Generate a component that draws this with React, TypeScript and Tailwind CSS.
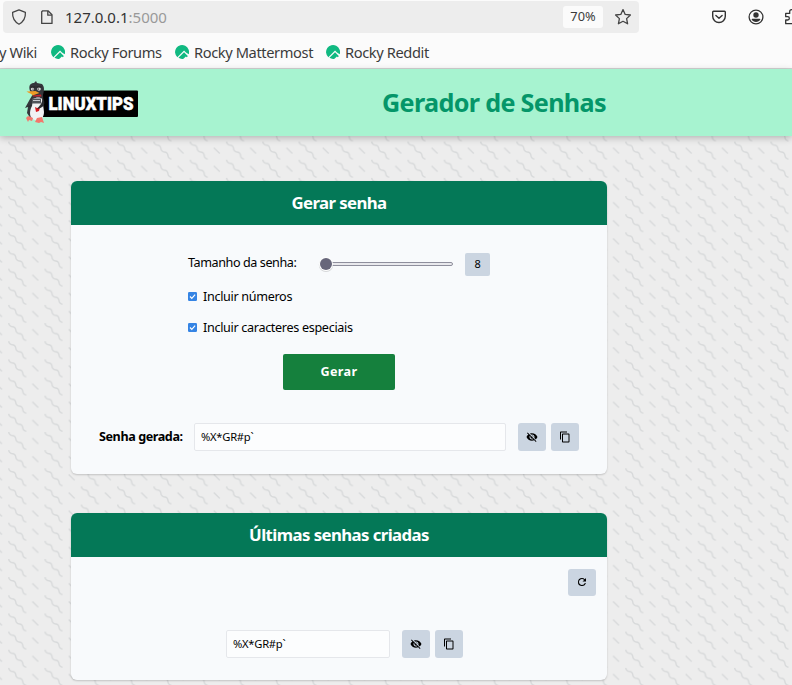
import React from "react";

const RockyIcon = () => (
  <svg width="14" height="14" viewBox="0 0 32 32" fill="#10b981" className="shrink-0">
    <path d="M31.3 21.2A16 16 0 1 0 5.3 27.9L20.7 12.5l4.4 4.4z" />
    <path d="M29.3 24.9l-8.6-8.5L7.9 29.2a16 16 0 0 0 8.1 2.8 16 16 0 0 0 3.4-.4l5.5-5.4 2 2a16 16 0 0 0 2.4-3.3z" />
  </svg>
);

const Bookmark = ({ label, className }: { label: string; className: string }) => (
  <div className={`flex items-center gap-[5px] whitespace-nowrap ${className}`}>
    <RockyIcon />
    <span>{label}</span>
  </div>
);

const EyeOff = () => (
  <svg width="12" height="12" viewBox="0 0 24 24" fill="#000">
    <path d="M12 7c2.76 0 5 2.24 5 5 0 .65-.13 1.26-.36 1.83l2.92 2.92c1.51-1.26 2.7-2.89 3.43-4.75-1.73-4.39-6-7.5-11-7.5-1.4 0-2.74.25-3.98.7l2.16 2.16C10.74 7.13 11.35 7 12 7zM2 4.27l2.28 2.28.46.46C3.08 8.3 1.78 10.02 1 12c1.73 4.39 6 7.5 11 7.5 1.55 0 3.03-.3 4.38-.84l.42.42L19.73 22 21 20.73 3.27 3 2 4.27zM7.53 9.8l1.55 1.55c-.05.21-.08.43-.08.65 0 1.66 1.34 3 3 3 .22 0 .44-.03.65-.08l1.55 1.55c-.67.33-1.41.53-2.2.53-2.76 0-5-2.24-5-5 0-.79.2-1.53.53-2.2zm4.31-.78l3.15 3.15.02-.16c0-1.66-1.34-3-3-3l-.17.01z" />
  </svg>
);

const Copy = () => (
  <svg width="12" height="12" viewBox="0 0 24 24" fill="#000">
    <path d="M16 1H4c-1.1 0-2 .9-2 2v14h2V3h12V1zm3 4H8c-1.1 0-2 .9-2 2v14c0 1.1.9 2 2 2h11c1.1 0 2-.9 2-2V7c0-1.1-.9-2-2-2zm0 16H8V7h11v14z" />
  </svg>
);

const Refresh = () => (
  <svg width="12" height="12" viewBox="0 0 24 24" fill="#000" className="-translate-y-px">
    <path d="M17.65 6.35A7.96 7.96 0 0 0 12 4a8 8 0 1 0 7.73 10h-2.08A5.99 5.99 0 0 1 12 18c-3.31 0-6-2.69-6-6s2.69-6 6-6c1.66 0 3.14.69 4.22 1.78L13 11h7V4l-2.35 2.35z" />
  </svg>
);

const IconButton = ({ children, className = "h-7" }: { children: React.ReactNode; className?: string }) => (
  <button className={`flex w-7 shrink-0 items-center justify-center rounded-[3px] bg-[#cbd5e1] ${className}`}>{children}</button>
);

const Check = ({ label }: { label: string }) => (
  <label className="flex h-[18px] items-center gap-1.5">
    <svg width="9" height="9" viewBox="0 0 9 9" className="mb-px shrink-0">
      <rect width="9" height="9" rx="1.3" fill="#3584e4" />
      <path d="M2 4.5l1.8 1.8L7.1 2.7" fill="none" stroke="#fff" strokeWidth="1.2" />
    </svg>
    <span>{label}</span>
  </label>
);

const Wiggles = () => (
  <svg className="absolute inset-0 h-full w-full" aria-hidden="true">
    <defs>
      <pattern id="wiggle" width="52" height="26" patternUnits="userSpaceOnUse" patternTransform="translate(8.1 0) scale(0.698)">
        <path
          fill="#9ca3a8"
          fillOpacity="0.28"
          d="M10 10c0-2.21-1.79-4-4-4-3.314 0-6-2.686-6-6h2c0 2.21 1.79 4 4 4 3.314 0 6 2.686 6 6 0 2.21 1.79 4 4 4 3.314 0 6 2.686 6 6 0 2.21 1.79 4 4 4v2c-3.314 0-6-2.686-6-6 0-2.21-1.79-4-4-4-3.314 0-6-2.686-6-6zm25.464-1.95l8.486 8.486-1.414 1.414-8.486-8.486 1.414-1.414z"
        />
      </pattern>
    </defs>
    <rect width="100%" height="100%" fill="url(#wiggle)" />
  </svg>
);

const Logo = () => (
  <svg width="114" height="44" viewBox="0 0 114 44" className="ml-[25px] mt-[12px] shrink-0 overflow-visible">
    <rect x="12" y="9.500" width="101" height="26.500" rx="1" fill="#000" />
    <text x="23.500" y="29.200" textLength="85" lengthAdjust="spacingAndGlyphs" fill="#fff" stroke="#fff" strokeWidth="0.500" fontSize="18.500" fontWeight="900" fontFamily="Roboto, sans-serif">LINUXTIPS</text>
    <path d="M5 10C3 4 6 2 9 2l2-2 1 2 5 1c3 3 2 7 1 11l1 15-3 8-10 1-4-6 1-6-3 1 5-9 3-5z" fill="#34363b" />
    <path d="M8 18c3-2 8-2 9 0l2 13c0 7-5 9-9 8-6-1-6-9-3-14z" fill="#f1f2f3" />
    <path d="M8 14.500l8-1 .5 2H8z" fill="#c9252c" />
    <path d="M7 17.500h9v5H7z" fill="#50545a" />
    <path d="M8 19.500h7" stroke="#c8cbd0" strokeWidth="1" />
    <circle cx="7.500" cy="8" r="1.600" fill="#ddd" /><circle cx="14" cy="8" r="1.800" fill="#ddd" />
    <path d="M5.500 6h5M11.500 6h5" stroke="#222" strokeWidth="1.200" />
    <circle cx="8" cy="8" r=".6" /><circle cx="13.600" cy="8" r=".6" />
    <path d="M1.500 10.500l9-.5 4 2-7 2.500c-1-2-3-2-6-4z" fill="#ee9c26" />
    <path d="M10 26l2 1 3-1-1 4-3 1z" fill="#d81920" />
    <path d="M18 18c3 4 1 9-6 10l4-5zM2 25l5-1-2 2z" fill="#282a2e" />
    <path d="M3 35l5 2-1 3-3-1-1 2-2-4zM12 37l5-1 2 6-3-1-2 1-4-1z" fill="#f4776c" />
  </svg>
);

const CardTitle = ({ children }: { children: React.ReactNode }) => (
  <h2 className="flex h-11 items-center justify-center bg-[#047857] text-[16.8px] font-bold tracking-[-0.58px] text-white">{children}</h2>
);

const cardClass = "w-[536px] overflow-hidden rounded-[6px] bg-[#f8fafc] shadow-[0_1px_2px_rgba(0,0,0,0.18)]";
const inputClass = "flex h-7 items-center rounded-[2px] border border-[#e5e7eb] bg-[#fcfdfe] px-1.5 text-[11.2px] tracking-[-0.25px]";

export default function App() {
  return (
    <div className="flex h-[685px] w-[792px] flex-col overflow-hidden bg-[#ededed] font-['Noto_Sans',sans-serif] text-black">
      <header className="h-[69px] shrink-0 border-b border-[#d3d3d3] bg-[#fbfbfb] pl-[3px] pt-[1px] text-[#3b3b3b]">
        <div className="flex h-8 items-center">
          <div className="flex h-8 w-[636px] shrink-0 items-center rounded-[4px] bg-[#ededed]">
            <svg width="16" height="16" viewBox="0 0 16 16" fill="none" stroke="#444" strokeWidth="1.25" strokeLinejoin="round" className="ml-[8px]">
              <path d="M8 .9l6.4 2.4c.3 5-1.9 9.5-6.4 11.9C3.500 12.800 1.300 8.300 1.600 3.300z" />
            </svg>
            <svg width="14" height="16" viewBox="0 0 14 16" fill="none" stroke="#444" strokeWidth="1.3" strokeLinejoin="round" className="ml-[13px]">
              <path d="M2.700 1.800H8l4 4v8.600H1.700V2.800z" /><path d="M7.800 2v4.200H12" />
            </svg>
            <span className="ml-[11px] text-[15px] tracking-[0px] text-[#333]">127.0.0.1<span className="text-[#999]">:5000</span></span>
            <span className="ml-auto flex h-[22px] w-10 items-center justify-center rounded-[3px] bg-[#fbfbfb] text-[12.8px]">70%</span>
            <svg width="18" height="18" viewBox="0 0 18 18" fill="none" stroke="#444" strokeWidth="1.3" strokeLinejoin="round" className="ml-[11px] mr-[7px]">
              <path d="M9 1.600l2.200 4.800 5.200.6-3.800 3.600 1 5.200L9 13.300l-4.600 2.500 1-5.200L1.600 7l5.200-.6z" />
            </svg>
          </div>
          <svg width="16" height="16" viewBox="0 0 16 16" fill="none" stroke="#333" strokeWidth="1.4" strokeLinecap="round" strokeLinejoin="round" className="ml-[72px] shrink-0">
            <path d="M2.500 2.300h11c.5 0 .8.3.8.8v4.100a6.300 6.300 0 0 1-12.600 0V3.100c0-.5.3-.8.8-.8z" /><path d="M4.900 6.500L8 9.300l3.100-2.800" />
          </svg>
          <svg width="16" height="16" viewBox="0 0 16 16" fill="#333" className="ml-[21px] shrink-0">
            <circle cx="8" cy="8" r="6.900" fill="none" stroke="#333" strokeWidth="1.300" /><circle cx="8" cy="6" r="2.700" /><path d="M3.600 10.500c0-.5.3-.8.8-.8h7.200c.5 0 .8.3.8.8-.9 1.600-2.500 2.500-4.400 2.500s-3.500-.9-4.400-2.500z" />
          </svg>
          <svg width="16" height="16" viewBox="0 0 16 16" fill="none" stroke="#333" strokeWidth="1.300" strokeLinejoin="round" className="ml-[20px] shrink-0">
            <path d="M1.700 14.700V11h2a1.600 1.600 0 0 0 0-3.300h-2V4.400h4V2.600a1.900 1.900 0 0 1 3.800 0v1.800H13v10.300z" />
          </svg>
        </div>
        <div className="ml-[-4px] flex h-[38px] items-center text-[14.67px] tracking-[-0.4px]">
          <span className="w-10 shrink-0 whitespace-nowrap">y Wiki</span>
          <Bookmark label="Rocky Forums" className="ml-[12px] w-[124px] shrink-0" />
          <Bookmark label="Rocky Mattermost" className="w-[151px] shrink-0" />
          <Bookmark label="Rocky Reddit" className="shrink-0" />
        </div>
      </header>

      <div className="relative isolate flex grow flex-col">
        <Wiggles />
        <nav className="relative flex h-[67px] shrink-0 bg-[#a7f3d0] shadow-[0_2px_7px_rgba(0,0,0,0.24)]">
          <Logo />
          <h1 className="ml-[243px] flex items-center whitespace-nowrap text-[25.2px] font-bold tracking-[-0.68px] text-[#059669]">Gerador de Senhas</h1>
        </nav>
        <main className="relative flex flex-col gap-[39px] pl-[71px] pt-[45px]">
          <section className={`${cardClass} h-[293px]`}>
            <CardTitle>Gerar senha</CardTitle>
            <div className="flex flex-col pt-[27px] text-[12.6px] tracking-[-0.32px]">
              <div className="ml-[117px] flex h-6 items-center">
                <span className="w-[130px] pb-0.5 tracking-[-0.42px]">Tamanho da senha:</span>
                <svg width="136" height="20" viewBox="0 0 136 20">
                  <rect x="8.500" y="8.500" width="126" height="3" rx="1.500" fill="#e9e9ed" stroke="#8f8f9d" />
                  <circle cx="8" cy="10.800" r="7.200" fill="#000" opacity=".14" />
                  <circle cx="8" cy="10" r="7" fill="#fff" /><circle cx="8" cy="10" r="6" fill="#67667a" />
                </svg>
                <span className="ml-[11px] flex h-[23px] w-[25px] items-center justify-center rounded-[2px] bg-[#cbd5e1] text-[11px]">8</span>
              </div>
              <div className="ml-[117px] mt-[12px] flex flex-col gap-[13px]">
                <Check label="Incluir números" />
                <Check label="Incluir caracteres especiais" />
              </div>
              <button className="ml-[212px] mt-[17px] h-9 w-28 rounded-[2px] bg-[#15803d] text-[12.6px] font-bold tracking-[0.4px] text-white">Gerar</button>
              <div className="mt-[33px] flex items-center pl-[28px]">
                <span className="w-[95px] whitespace-nowrap font-bold tracking-[-0.42px]">Senha gerada:</span>
                <div className={`${inputClass} w-[312px]`}>%X*GR#p`</div>
                <div className="ml-3 flex gap-[5px]">
                  <IconButton><EyeOff /></IconButton>
                  <IconButton><Copy /></IconButton>
                </div>
              </div>
            </div>
          </section>
          <section className={`${cardClass} h-[167px]`}>
            <CardTitle>Últimas senhas criadas</CardTitle>
            <div className="flex justify-end pr-[11px] pt-[12px]">
              <IconButton className="h-[27px]"><Refresh /></IconButton>
            </div>
            <div className="ml-[155px] mt-[34px] flex">
              <div className={`${inputClass} w-[164px]`}>%X*GR#p`</div>
              <div className="ml-3 flex gap-[5px]">
                <IconButton><EyeOff /></IconButton>
                <IconButton><Copy /></IconButton>
              </div>
            </div>
          </section>
        </main>
      </div>
    </div>
  );
}
